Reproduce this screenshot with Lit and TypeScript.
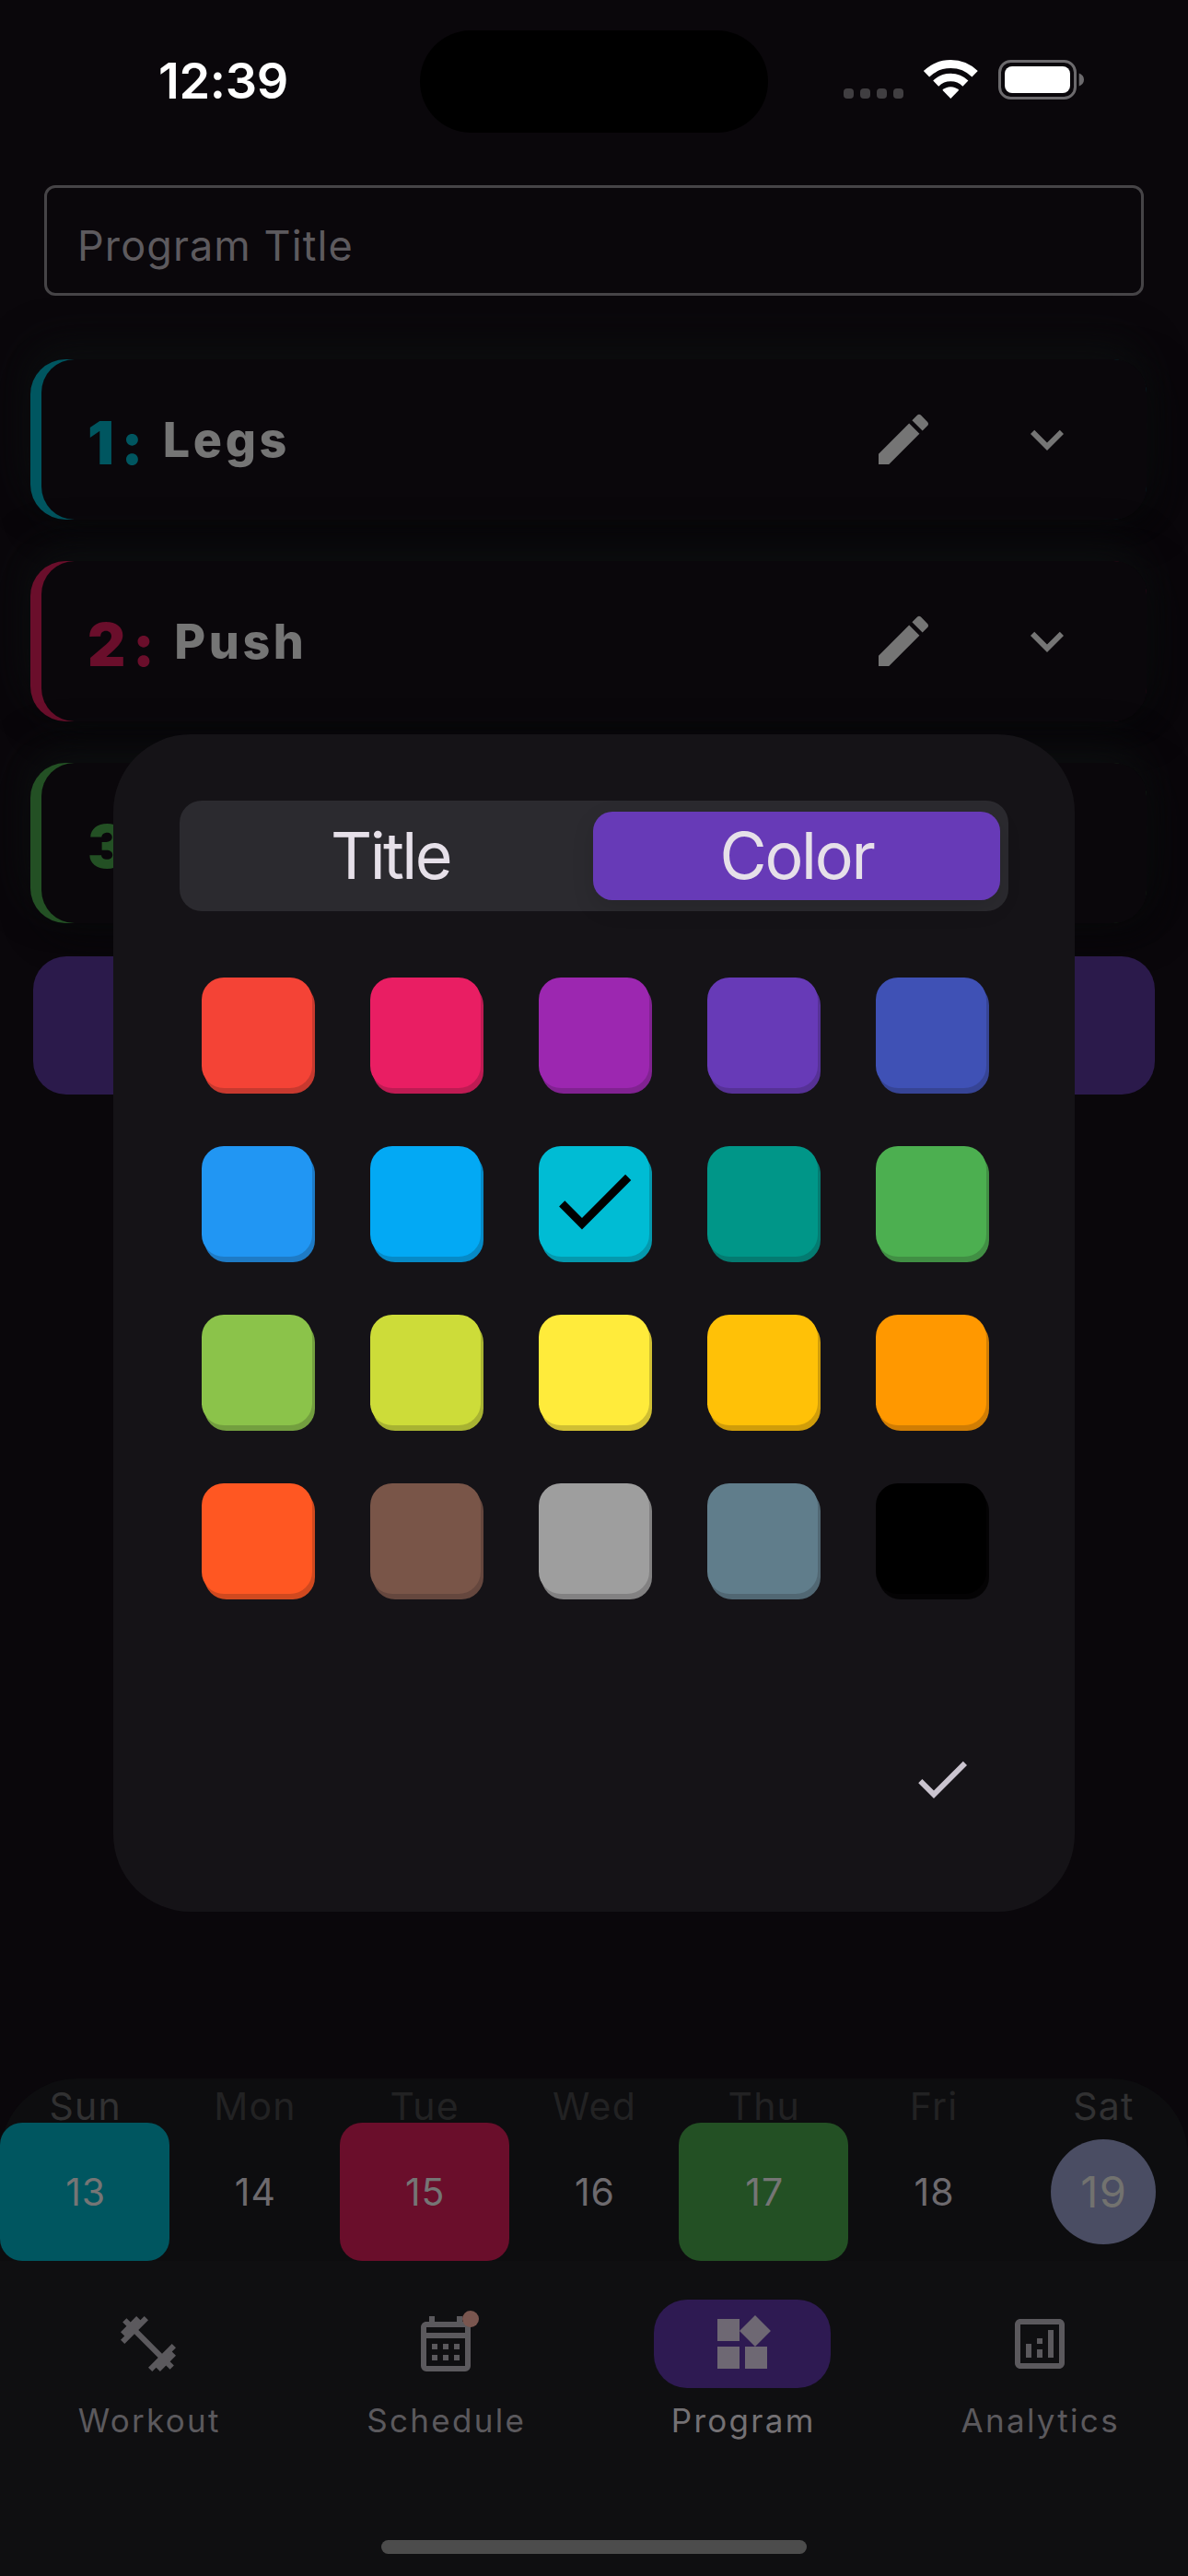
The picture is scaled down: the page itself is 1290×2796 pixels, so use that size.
import { LitElement, html, css, svg, nothing } from "lit";
import { customElement, property, state } from "lit/decorators.js";
import { classMap } from "lit/directives/class-map.js";
import { styleMap } from "lit/directives/style-map.js";

const ICONS: Record<string, string> = {
  edit: "M3 17.25V21h3.75L17.81 9.94l-3.75-3.75L3 17.25zM20.71 7.04c.39-.39.39-1.02 0-1.41l-2.34-2.34a.9959.9959 0 0 0-1.41 0l-1.83 1.83 3.75 3.75 1.83-1.83z",
  expand: "M7.41 8.59 12 13.17l4.59-4.58L18 10l-6 6-6-6z",
  done: "M9 16.2 4.8 12l-1.4 1.4L9 19 21 7l-1.4-1.4L9 16.2z",
  workout: "M20.57 14.86 22 13.43 20.57 12 17 15.57 8.43 7 12 3.43 10.57 2 9.14 3.43 7.71 2 5.57 4.14 4.14 2.71 2.71 4.14l1.43 1.43L2 7.71l1.43 1.43L2 10.57 3.43 12 7 8.43 15.57 17 12 20.57 13.43 22l1.43-1.43L16.29 22l2.14-2.14 1.43 1.43 1.43-1.43-1.43-1.43L22 16.29z",
  schedule: "M19 4h-1V2h-2v2H8V2H6v2H5c-1.11 0-1.99.9-1.99 2L3 20a2 2 0 0 0 2 2h14c1.1 0 2-.9 2-2V6c0-1.1-.9-2-2-2zm0 16H5V10h14v10zm0-12H5V6h14v2zM9 14H7v-2h2v2zm4 0h-2v-2h2v2zm4 0h-2v-2h2v2zm-8 4H7v-2h2v2zm4 0h-2v-2h2v2zm4 0h-2v-2h2v2z",
  program: "M13 13v8h8v-8h-8zM3 21h8v-8H3v8zM3 3v8h8V3H3zm13.66-1.31L11 7.34 16.66 13l5.66-5.66-5.66-5.65z",
  analytics: "M19 3H5c-1.1 0-2 .9-2 2v14c0 1.1.9 2 2 2h14c1.1 0 2-.9 2-2V5c0-1.1-.9-2-2-2zm0 16H5V5h14v14zM7 12h2v5H7zM15 7h2v10h-2zM11 14h2v3h-2zM11 10h2v2h-2z",
};

@customElement("md-icon")
class MdIcon extends LitElement {
  @property() name = "";
  static styles = css`
    :host { display: block; width: 72px; height: 72px; flex: none; }
    .glyph { display: block; width: 100%; height: 100%; fill: currentColor; }
  `;
  render() {
    return html`<svg class="glyph" viewBox="0 0 24 24">${svg`<path d=${ICONS[this.name] ?? ""}></path>`}</svg>`;
  }
}

@customElement("status-bar")
class StatusBar extends LitElement {
  static styles = css`
    :host { display: grid; grid-template-columns: 456px 378px 1fr; height: 201px; padding-top: 33px; box-sizing: border-box; }
    .time { height: 111px; line-height: 110px; padding-left: 29px; text-align: center; color: #fff; font-size: 54px; font-weight: 600; letter-spacing: -0.3px; }
    .island { height: 111px; border-radius: 56px; background: #000; }
    .icons { padding: 32px 0 0 82px; }
    .glyphs { display: block; width: 264px; height: 46px; }
  `;
  render() {
    return html`
      <div class="time">12:39</div>
      <div class="island"></div>
      <div class="icons">
        <svg class="glyphs" viewBox="0 0 264 46">
          <g fill="#403e41">
            <rect x="0" y="31" width="11" height="11" rx="4"></rect>
            <rect x="18" y="31" width="11" height="11" rx="4"></rect>
            <rect x="36" y="31" width="11" height="11" rx="4"></rect>
            <rect x="54" y="31" width="11" height="11" rx="4"></rect>
          </g>
          <g fill="none" stroke="#fff">
            <path d="M90 15.3A37.500 37.500 0 0 1 142.600 15.3" stroke-width="9"></path>
            <path d="M100.200 25.600A23 23 0 0 1 132.400 25.600" stroke-width="8.600"></path>
          </g>
          <path d="M116.300 42l-9-9.200a13.200 13.200 0 0 1 18 0z" fill="#fff"></path>
          <rect x="169.500" y="1.500" width="82" height="40" rx="12" fill="none" stroke="#6c6a6d" stroke-width="3"></rect>
          <rect x="175" y="7" width="71" height="29" rx="8" fill="#fff"></rect>
          <path d="M255.700 14.500c3.500 1.200 5.300 4 5.300 7s-1.800 5.800-5.300 7z" fill="#6c6a6d"></path>
        </svg>
      </div>`;
  }
}

@customElement("program-day")
class ProgramDay extends LitElement {
  @property({ type: Number }) index = 1;
  @property() label = "";
  @property() accent = "";
  static styles = css`
    :host { display: block; height: 174px; }
    .shell { height: 174px; padding-left: 12px; box-sizing: border-box; border-radius: 38px;
      box-shadow: -4px -18px 44px #0c0e0f, 12px 10px 40px #070709; }
    .card { height: 174px; box-sizing: border-box; border-radius: 36px; background: #0a070b; display: flex; align-items: center; padding: 0 72px 0 50px; color: #757575; }
    .index { font-size: 64px; font-weight: 900; line-height: 78px; padding-top: 7px; letter-spacing: 7.500px; }
    .label { flex: 1; font-size: 52px; font-weight: 800; line-height: 64px; padding-top: 2px; margin-left: 14px; letter-spacing: 3.600px; }
    .toggle { margin-left: 84px; }
  `;
  render() {
    return html`
      <div class="shell" style=${styleMap({ background: this.accent })}>
        <div class="card">
          <span class="index" style=${styleMap({ color: this.accent })}>${this.index}:</span>
          <span class="label">${this.label}</span>
          <md-icon name="edit"></md-icon>
          <md-icon class="toggle" name="expand"></md-icon>
        </div>
      </div>`;
  }
}

@customElement("color-dialog")
class ColorDialog extends LitElement {
  @state() private selected = 7;
  private colors = [
    "#f44336", "#e91e63", "#9c27b0", "#673ab7", "#3f51b5",
    "#2196f3", "#03a9f4", "#00bcd4", "#009688", "#4caf50",
    "#8bc34a", "#cddc39", "#ffeb3b", "#ffc107", "#ff9800",
    "#ff5722", "#795548", "#9e9e9e", "#607d8b", "#000000",
  ];
  static styles = css`
    :host { display: flex; flex-direction: column; width: 1044px; height: 1278px; box-sizing: border-box; padding: 72px; border-radius: 84px; background: #151317; }
    .tabs { height: 120px; box-sizing: border-box; padding: 12px 9px; display: grid; grid-template-columns: 1fr 442px; border-radius: 24px; background: #2b2a2f; }
    .tab { height: 96px; line-height: 95px; text-align: center; font-size: 70px; color: #e6e0e9; letter-spacing: -2.600px; border-radius: 21px; }
    .active { background: #673ab7; box-shadow: 0 9px 24px rgba(0, 0, 0, 0.12); letter-spacing: -2.300px; }
    .grid { display: grid; grid-template-columns: repeat(5, 120px); gap: 63px; padding: 72px 0 0 24px; }
    .swatch { height: 120px; border-radius: 24px; display: grid; place-items: center; color: #000; }
    .mark { width: 106.600px; height: 106.600px; }
    .actions { display: flex; justify-content: flex-end; padding: 165px 36px 0 0; color: #cac4cf; }
  `;
  render() {
    return html`
      <div class="tabs">
        <div class="tab">Title</div>
        <div class="tab active">Color</div>
      </div>
      <div class="grid">
        ${this.colors.map((c, i) => html`
          <div class="swatch" style=${styleMap({ background: c, boxShadow: `3px 6px 0 ${c}cc` })}
            @click=${() => (this.selected = i)}>
            ${i === this.selected ? html`<md-icon class="mark" name="done"></md-icon>` : nothing}
          </div>`)}
      </div>
      <div class="actions"><md-icon name="done"></md-icon></div>`;
  }
}

@customElement("week-strip")
class WeekStrip extends LitElement {
  private days = [
    { name: "Sun", date: 13, color: "#005660", weekend: true },
    { name: "Mon", date: 14 },
    { name: "Tue", date: 15, color: "#6a0e2b" },
    { name: "Wed", date: 16 },
    { name: "Thu", date: 17, color: "#235024" },
    { name: "Fri", date: 18 },
    { name: "Sat", date: 19, weekend: true, today: true },
  ] as { name: string; date: number; color?: string; weekend?: boolean; today?: boolean }[];
  static styles = css`
    :host { display: grid; grid-template-columns: repeat(7, 1fr); height: 198px; border-radius: 84px 84px 0 0; background: #0d0d0f; font-size: 41px; }
    .day { display: flex; flex-direction: column; }
    .name { height: 48px; line-height: 60px; padding-left: 1px; text-align: center; color: #222223; letter-spacing: 1.200px; }
    .weekend { color: #313132; }
    .cell { height: 150px; display: grid; place-items: center; border-radius: 24px; color: #6d6a6e; }
    .filled { color: #757575; }
    .date { padding-left: 2px; letter-spacing: 1px; }
    .today { width: 114px; height: 114px; box-sizing: border-box; line-height: 114px; border-radius: 50%; text-align: center; background: #4a4d63; color: #72726f; font-size: 47px; letter-spacing: 1.500px; }
  `;
  render() {
    return this.days.map((d) => html`
      <div class="day">
        <div class=${classMap({ name: true, weekend: !!d.weekend })}>${d.name}</div>
        <div class=${classMap({ cell: true, filled: !!d.color })} style=${styleMap({ background: d.color ?? "transparent" })}>
          <span class=${classMap({ date: true, today: !!d.today })}>${d.date}</span>
        </div>
      </div>`);
  }
}

@customElement("nav-bar")
class NavBar extends LitElement {
  static styles = css`
    :host { display: flex; flex-direction: column; height: 342px; background: #0f0f11; }
    .items { display: grid; grid-template-columns: repeat(4, 1fr); height: 303px; padding-top: 42px; box-sizing: border-box; }
    .item { display: flex; flex-direction: column; align-items: center; color: #5b595d; }
    .pill { position: relative; width: 192px; height: 96px; display: grid; place-items: center; border-radius: 36px; }
    .current { color: #747174; }
    .current .pill { background: #2e1a52; color: #6e6873; }
    .badge { position: absolute; left: 114px; top: 12px; width: 18px; height: 18px; border-radius: 50%; background: #7a564f; }
    .text { font-size: 35px; line-height: 48px; margin-top: 11px; padding-left: 2px; letter-spacing: 2.300px; }
    .home { width: 462px; height: 15px; border-radius: 8px; background: #4c4c4c; align-self: center; }
  `;
  private items = [
    { label: "Workout", icon: "workout" },
    { label: "Schedule", icon: "schedule", badge: true },
    { label: "Program", icon: "program", current: true },
    { label: "Analytics", icon: "analytics" },
  ] as { label: string; icon: string; badge?: boolean; current?: boolean }[];
  render() {
    return html`
      <div class="items">
        ${this.items.map((n) => html`
          <div class=${classMap({ item: true, current: !!n.current })}>
            <div class="pill">
              <md-icon name=${n.icon}></md-icon>
              ${n.badge ? html`<span class="badge"></span>` : nothing}
            </div>
            <span class="text">${n.label}</span>
          </div>`)}
      </div>
      <div class="home"></div>`;
  }
}

@customElement("app-root")
class AppRoot extends LitElement {
  static styles = css`
    :host { display: block; position: relative; width: 1290px; height: 2796px; overflow: hidden; background: #0a070b; font-family: Inter, "Liberation Sans", sans-serif; }
    .page { display: flex; flex-direction: column; height: 2796px; }
    .field { height: 120px; box-sizing: border-box; margin: 0 48px; padding-left: 33px; border: 3px solid #464447; border-radius: 12px; color: #5d5a5e; font-size: 45px; line-height: 126px; letter-spacing: 1.100px; }
    .days { display: flex; flex-direction: column; gap: 45px; padding: 69px 45px 0 33px; }
    .add { height: 150px; margin: 36px 36px 0; border-radius: 36px; background: #2b1a4b; }
    .spacer { flex: 1; }
    .overlay { position: absolute; left: 123px; top: 796.500px; }
  `;
  render() {
    return html`
      <div class="page">
        <status-bar></status-bar>
        <div class="field">Program Title</div>
        <div class="days">
          <program-day index="1" label="Legs" accent="#005660"></program-day>
          <program-day index="2" label="Push" accent="#6a0e2b"></program-day>
          <program-day index="3" label="Pull" accent="#235024"></program-day>
        </div>
        <div class="add"></div>
        <div class="spacer"></div>
        <week-strip></week-strip>
        <nav-bar></nav-bar>
      </div>
      <color-dialog class="overlay"></color-dialog>`;
  }
}
